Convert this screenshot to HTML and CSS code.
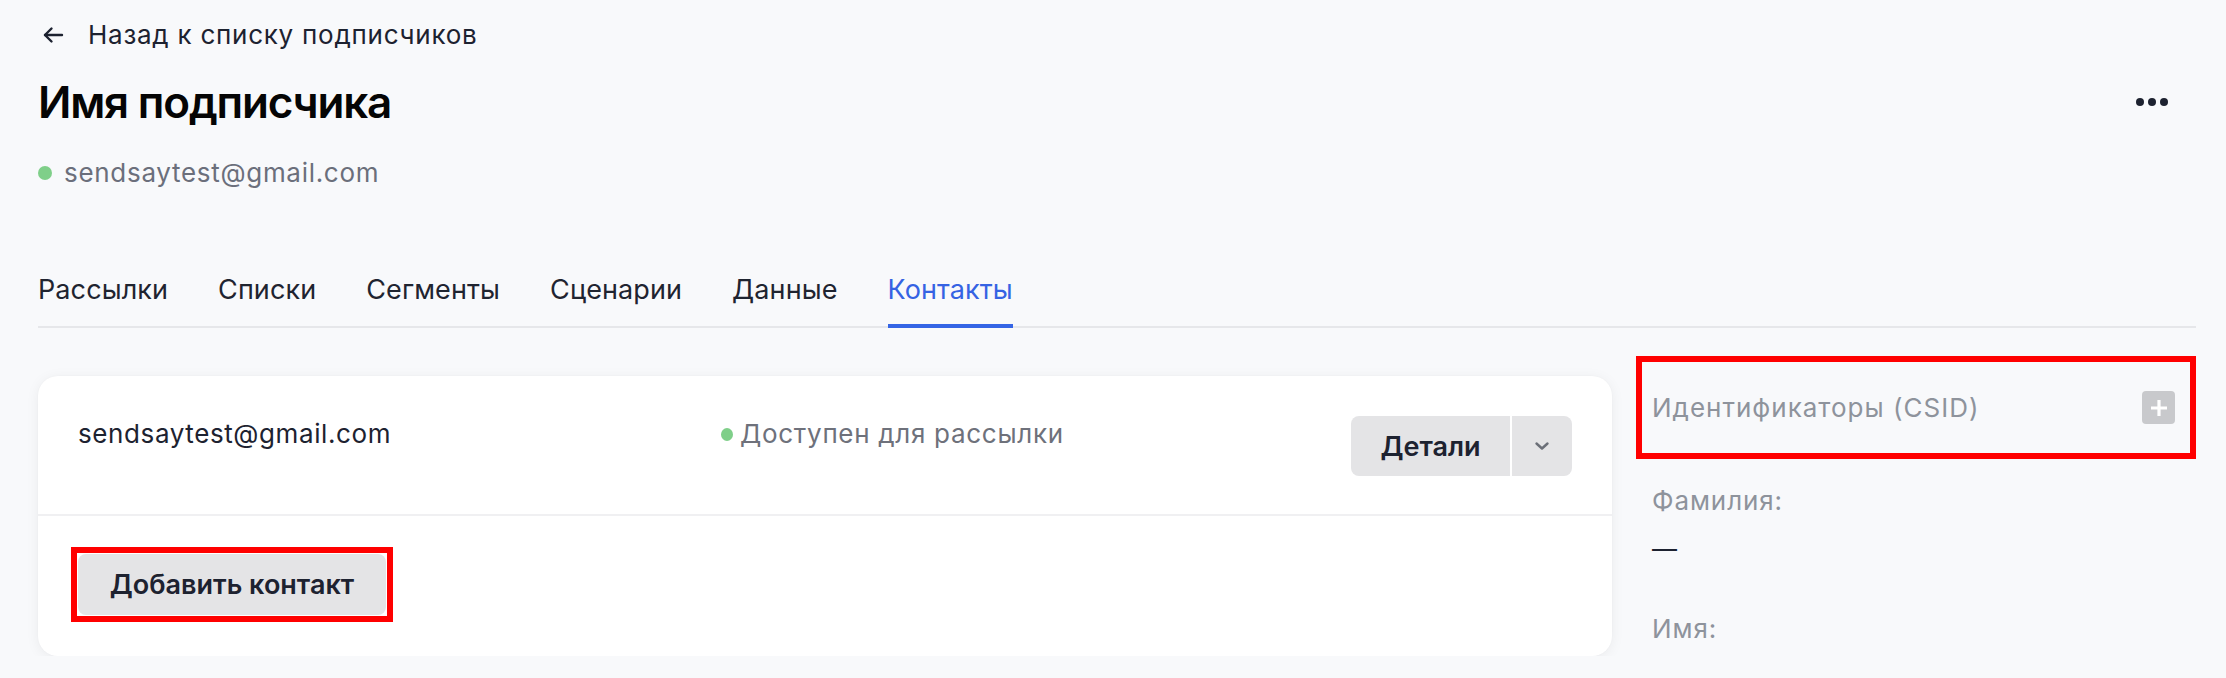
FILE: index.html
```html
<!DOCTYPE html>
<html lang="ru">
<head>
<meta charset="utf-8">
<title>Имя подписчика</title>
<link rel="stylesheet" href="styles.css">
</head>
<body>
<div class="page">
  <a class="back" href="#">
    <svg class="back-icon" width="22" height="18" viewBox="0 0 22 18" fill="none" stroke="currentColor" stroke-width="2.4" stroke-linecap="round" stroke-linejoin="round"><path d="M20 9H3"/><path d="M9.5 2.5L3 9l6.5 6.5"/></svg>
    <span>Назад к списку подписчиков</span>
  </a>
  <div class="head">
    <h1 class="title">Имя подписчика</h1>
    <button class="more" type="button" aria-label="Ещё"><span></span><span></span><span></span></button>
  </div>
  <div class="email-line"><span class="dot"></span>sendsaytest@gmail.com</div>

  <nav class="tabs">
    <a class="tab" href="#">Рассылки</a>
    <a class="tab" href="#">Списки</a>
    <a class="tab" href="#">Сегменты</a>
    <a class="tab" href="#">Сценарии</a>
    <a class="tab" href="#">Данные</a>
    <a class="tab active" href="#">Контакты</a>
  </nav>

  <div class="content">
    <section class="card">
      <div class="card-row">
        <div class="contact-email">sendsaytest@gmail.com</div>
        <div class="status"><span class="dot small"></span>Доступен для рассылки</div>
        <div class="split">
          <button class="split-main" type="button">Детали</button>
          <button class="split-toggle" type="button" aria-label="Ещё">
            <svg width="16" height="10" viewBox="0 0 16 10" fill="none" stroke="currentColor" stroke-width="2.4" stroke-linecap="round" stroke-linejoin="round"><path d="M2.5 2.5L8 7.5l5.5-5"/></svg>
          </button>
        </div>
      </div>
      <div class="card-foot">
        <span class="marked-wrap"><button class="btn-add" type="button">Добавить контакт</button></span>
      </div>
    </section>

    <aside class="side">
      <div class="side-head marked-box">
        <span class="side-title">Идентификаторы (CSID)</span>
        <button class="plus" type="button" aria-label="Добавить">
          <svg width="18" height="18" viewBox="0 0 18 18" fill="none" stroke="#fff" stroke-width="3.2" stroke-linecap="butt"><path d="M9 1v16M1 9h16"/></svg>
        </button>
      </div>
      <div class="field">
        <div class="field-label">Фамилия:</div>
        <div class="field-value">—</div>
      </div>
      <div class="field">
        <div class="field-label">Имя:</div>
      </div>
    </aside>
  </div>
</div>
</body>
</html>
```

FILE: styles.css
```css
* { box-sizing: border-box; }

html, body {
  margin: 0;
  padding: 0;
  background: #f8f9fb;
}

body {
  font-family: Inter, "Noto Sans", "Liberation Sans", sans-serif;
  color: #1d2230;
}

.page {
  padding: 20px 30px 0 38px;
}

.back {
  display: flex;
  align-items: center;
  gap: 24px;
  height: 30px;
  font-size: 26px;
  line-height: 30px;
  letter-spacing: 0.75px;
  color: #1d2230;
  text-decoration: none;
}

.back-icon {
  display: block;
  margin-left: 4px;
  color: #1d2230;
}

.head {
  display: flex;
  align-items: center;
  justify-content: space-between;
  margin-top: 26px;
}

.title {
  margin: 0;
  font-size: 44px;
  line-height: 52px;
  font-weight: 600;
  color: #050505;
  letter-spacing: -1.2px;
}

.more {
  display: flex;
  gap: 4px;
  padding: 0;
  margin: 0 28px 0 0;
  border: 0;
  background: none;
  cursor: pointer;
}

.more span {
  width: 8px;
  height: 8px;
  border-radius: 50%;
  background: #1d2230;
}

.email-line {
  display: flex;
  align-items: center;
  gap: 12px;
  margin-top: 28px;
  font-size: 26px;
  line-height: 34px;
  letter-spacing: 0.7px;
  color: #6b6f7b;
}

.dot {
  display: inline-block;
  width: 14px;
  height: 14px;
  border-radius: 50%;
  background: #7fcf89;
  flex: none;
}

.dot.small {
  width: 12px;
  height: 13px;
}

.tabs {
  display: flex;
  gap: 50px;
  margin-top: 83px;
  border-bottom: 2px solid #e6e7ea;
}

.tab {
  display: block;
  font-size: 27px;
  line-height: 34px;
  letter-spacing: 0.1px;
  padding-bottom: 17px;
  border-bottom: 4px solid transparent;
  margin-bottom: -2px;
  color: #1f2430;
  text-decoration: none;
}

.tab.active {
  color: #3563e3;
  border-bottom-color: #3565e5;
}

.content {
  display: grid;
  grid-template-columns: 1574px 560px;
  column-gap: 24px;
  align-items: start;
  margin-top: 28px;
}

.card {
  margin-top: 20px;
  background: #fff;
  border-radius: 20px;
  box-shadow: 0 2px 14px rgba(20, 24, 40, 0.06), 0 0 2px rgba(20, 24, 40, 0.03);
}

.card-row {
  display: grid;
  grid-template-columns: 643px 1fr auto;
  align-items: start;
  height: 140px;
  padding: 40px 40px 0 40px;
  border-bottom: 2px solid #f0f0f2;
}

.contact-email {
  font-size: 26px;
  line-height: 36px;
  letter-spacing: 0.6px;
  color: #1d2230;
}

.status {
  display: flex;
  align-items: center;
  gap: 7px;
  font-size: 26px;
  line-height: 36px;
  letter-spacing: 0.7px;
  color: #6e717b;
}

.split {
  display: flex;
  gap: 2px;
}

.split-main,
.split-toggle,
.btn-add {
  font-family: inherit;
  border: 0;
  background: #e4e4e6;
  color: #1d2230;
  cursor: pointer;
}

.split-main {
  height: 60px;
  width: 159px;
  border-radius: 8px 0 0 8px;
  font-size: 27px;
  font-weight: 600;
}

.split-toggle {
  height: 60px;
  width: 60px;
  border-radius: 0 8px 8px 0;
  display: flex;
  align-items: center;
  justify-content: center;
  color: #6b6f78;
}

.card-foot {
  padding: 31px 40px 34px 33px;
}

.marked-wrap {
  display: inline-block;
  border: 6px solid #ff0000;
  padding: 1px;
}

.btn-add {
  display: block;
  height: 61px;
  width: 308px;
  border-radius: 8px;
  font-size: 27px;
  font-weight: 600;
}

.side {
  display: flex;
  flex-direction: column;
}

.marked-box {
  border: 6px solid #ff0000;
}

.side-head {
  display: flex;
  align-items: center;
  justify-content: space-between;
  height: 103px;
  padding: 0 15px 0 10px;
}

.side-title {
  font-size: 26px;
  line-height: 34px;
  letter-spacing: 1px;
  color: #8e939c;
}

.plus {
  width: 33px;
  height: 33px;
  border: 0;
  border-radius: 4px;
  background: #c8c9cc;
  display: flex;
  align-items: center;
  justify-content: center;
  padding: 0;
  cursor: pointer;
}

.field {
  padding-left: 16px;
  margin-top: 25px;
}

.field + .field {
  margin-top: 46px;
}

.field-label {
  font-size: 26px;
  line-height: 34px;
  letter-spacing: 0.9px;
  color: #8e939c;
}

.field-value {
  margin-top: 14px;
  font-size: 25px;
  line-height: 34px;
  color: #1d2230;
}
```
